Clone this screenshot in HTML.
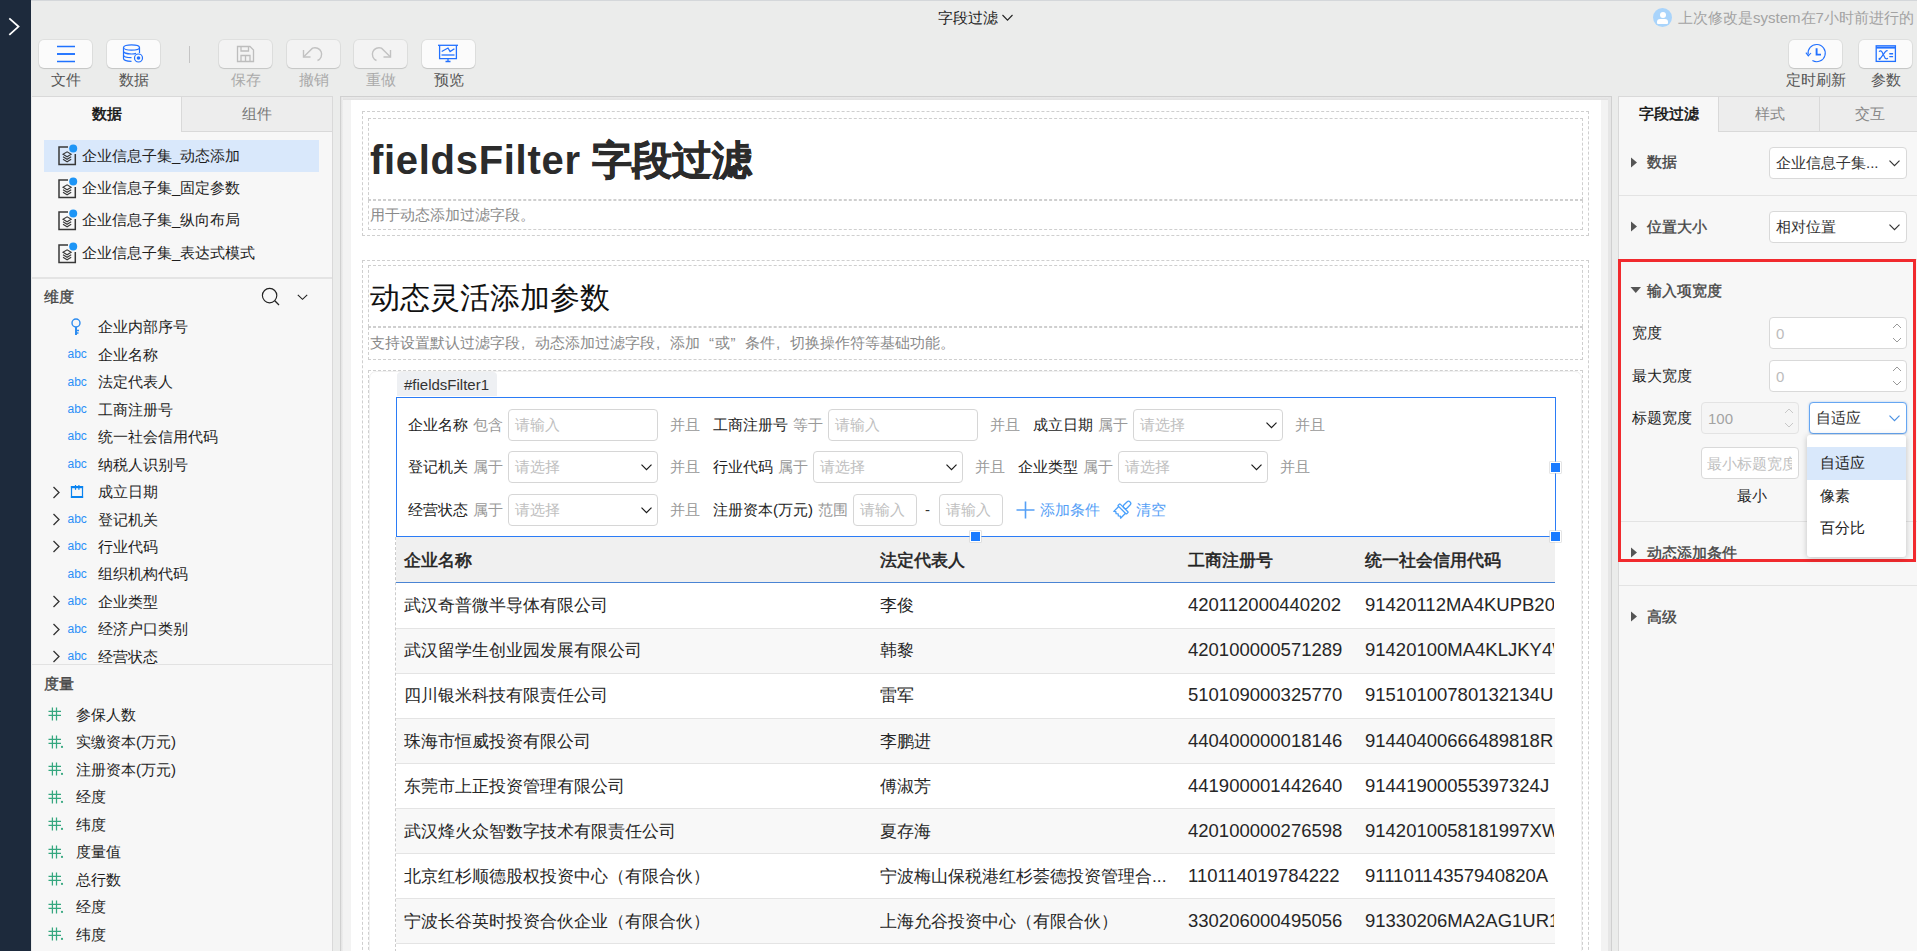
<!DOCTYPE html><html><head><meta charset="utf-8"><title>fieldsFilter</title><style>
*{box-sizing:border-box;margin:0;padding:0}
html,body{width:1917px;height:951px;overflow:hidden}
body{position:relative;background:#ebeceb;font-family:"Liberation Sans",sans-serif;color:#333}
.a{position:absolute}
.t{white-space:nowrap}
.b{-webkit-text-stroke:0.45px currentColor}
.btn{position:absolute;top:40px;width:53px;height:28px;border-radius:5px;background:#fbfbfb;box-shadow:0 1px 1px rgba(0,0,0,.12),0 0 0 1px rgba(0,0,0,.05)}
.btn.dis{background:#f3f3f3}
.inp{position:absolute;background:#fff;border:1px solid #d9d9d9;border-radius:4px}
.dash{position:absolute;border:1px dashed #cfcfcf}
.pc{display:inline-block;width:1em;padding-left:1px}
.ql{display:inline-block;width:1em;text-align:right;padding-right:1px}
.qr{display:inline-block;width:1em;text-align:left;padding-left:0.5px}
</style></head><body>
<div class="a" style="left:0px;top:0px;width:31px;height:951px;background:#1d2a3c"></div>
<svg class="a" style="left:8px;top:17px" width="14" height="20" viewBox="0 0 14 20"><polyline points="1.3,1.4 10.5,9.6 1.3,17.8" fill="none" stroke="#fff" stroke-width="1.8"/></svg>
<div class="a" style="left:31px;top:0px;width:1886px;height:1px;background:#d4d7da"></div>
<div class="a t" style="left:938px;top:7.00px;font-size:15px;line-height:21px;color:#1e1e1e;">字段过滤</div>
<svg class="a" style="left:1001px;top:14px" width="13" height="8" viewBox="0 0 13 8"><polyline points="1.5,1 6.5,6.2 11.5,1" fill="none" stroke="#222" stroke-width="1.1"/></svg>
<div class="a" style="left:1653px;top:8px;width:19px;height:19px;border-radius:50%;background:#a9d4fb;overflow:hidden"><div class="a" style="left:6.5px;top:4px;width:6px;height:6px;border-radius:50%;background:#fff"></div><div class="a" style="left:4px;top:10.5px;width:11px;height:5px;border-radius:3px 3px 1px 1px;background:#fff"></div></div>
<div class="a t" style="left:1678px;top:7.00px;font-size:15px;line-height:21px;color:#a3a3a3;">上次修改是system在7小时前进行的</div>
<div class="btn" style="left:39px"><svg class="a" style="left:17px;top:5px" width="20" height="18" viewBox="0 0 20 18"><path d="M1 1.5H19M1 16.5H19" stroke="#1f72ff" stroke-width="1.3" fill="none"/><path d="M1 9H19" stroke="#1f72ff" stroke-width="1.9" fill="none"/></svg></div>
<div class="a t" style="left:50.5px;top:69.00px;font-size:15px;line-height:21px;color:#555;">文件</div>
<div class="btn" style="left:107px"><svg class="a" style="left:15px;top:4px" width="24" height="20" viewBox="0 0 24 20"><g fill="none" stroke="#2271ff" stroke-width="1.2"><ellipse cx="9.5" cy="3.5" rx="8" ry="2.6"/><path d="M1.5 3.5V14.5C1.5 16 5 17.3 9.5 17.3"/><path d="M17.5 3.5V9"/><path d="M1.5 7.2C1.5 8.7 5 10 9.5 10C11.5 10 13 9.8 14 9.4"/><path d="M1.5 10.9C1.5 12.4 5 13.6 9.5 13.6"/><circle cx="16.5" cy="14" r="4"/></g><circle cx="16.5" cy="14" r="1.8" fill="#2271ff"/></svg></div>
<div class="a t" style="left:118.5px;top:69.00px;font-size:15px;line-height:21px;color:#555;">数据</div>
<div class="a" style="left:189px;top:46px;width:1px;height:17px;background:#c4c4c4"></div>
<div class="btn dis" style="left:219px"><svg class="a" style="left:17px;top:5px" width="19" height="18" viewBox="0 0 19 18"><g fill="none" stroke="#bdbdbd" stroke-width="1.3"><path d="M1.5 1.5H14L17.5 5V16.5H1.5Z"/><path d="M5 1.5V6H12.5V1.5"/><path d="M5 16.5V10.5H14V16.5"/><path d="M9.5 10.5V16.5"/></g></svg></div>
<div class="a t" style="left:230.5px;top:69.00px;font-size:15px;line-height:21px;color:#aaa;">保存</div>
<div class="btn dis" style="left:287px"><svg class="a" style="left:0;top:0" width="53" height="28" viewBox="0 0 53 28"><g fill="none" stroke="#c2c2c2" stroke-width="1.4"><path d="M16.5 17L25.5 8.2A6.3 6.3 0 1 1 30.5 20.5"/><path d="M16.5 10V17H23.5"/></g></svg></div>
<div class="a t" style="left:298.5px;top:69.00px;font-size:15px;line-height:21px;color:#aaa;">撤销</div>
<div class="btn dis" style="left:354px"><svg class="a" style="left:0;top:0" width="53" height="28" viewBox="0 0 53 28"><g fill="none" stroke="#c2c2c2" stroke-width="1.4" transform="translate(53 0) scale(-1 1)"><path d="M16.5 17L25.5 8.2A6.3 6.3 0 1 1 30.5 20.5"/><path d="M16.5 10V17H23.5"/></g></svg></div>
<div class="a t" style="left:365.5px;top:69.00px;font-size:15px;line-height:21px;color:#aaa;">重做</div>
<div class="btn" style="left:422px"><svg class="a" style="left:0;top:0" width="53" height="28" viewBox="0 0 53 28"><g fill="none" stroke="#2271ff" stroke-width="1.3"><path d="M16 5.3H36"/><path d="M17.6 5.3V18.6H34.4V5.3"/><path d="M19.7 11.5L26 8L28.1 11.5L32.4 8.7"/><path d="M19.5 15H32.5"/><path d="M26 18.6V21.5M23.5 21.5H28.5"/></g></svg></div>
<div class="a t" style="left:433.5px;top:69.00px;font-size:15px;line-height:21px;color:#555;">预览</div>
<div class="btn" style="left:1789px"><svg class="a" style="left:0;top:0" width="53" height="28" viewBox="0 0 53 28"><g fill="none" stroke="#2271ff" stroke-width="1.1"><path d="M19.2 14.7A8.6 8.6 0 1 1 23.4 20.6"/><path d="M16.9 12.6L19.3 15.9L22 13"/></g><path d="M27.6 8.3V14.6H32" fill="none" stroke="#2271ff" stroke-width="1.9"/></svg></div>
<div class="a t" style="left:1785.5px;top:69.00px;font-size:15px;line-height:21px;color:#555;">定时刷新</div>
<div class="btn" style="left:1859px"><svg class="a" style="left:0;top:0" width="53" height="28" viewBox="0 0 53 28"><g fill="none" stroke="#2271ff"><rect x="17.2" y="5.8" width="19.2" height="15.6" stroke-width="1.3"/><path d="M17.2 7.6H36.4" stroke-width="2"/><path d="M20 11.6Q21.8 10 23.2 12.2L25.8 17.6Q26.9 19.6 29 18.2" stroke-width="1.2"/><path d="M28.6 10.6Q27.6 10.3 26.4 11.6L21.2 18.6" stroke-width="1.2"/><path d="M30.3 13.8H34.1M30.3 16.6H34.1" stroke-width="1.4"/></g><circle cx="20.6" cy="18.9" r="1.1" fill="#2271ff"/></svg></div>
<div class="a t" style="left:1870.5px;top:69.00px;font-size:15px;line-height:21px;color:#555;">参数</div>
<div class="a" style="left:32px;top:96px;width:301px;height:855px;background:#f7f7f7;border-top:1px solid #d9d9d9;border-right:1px solid #d9d9d9"></div>
<div class="a" style="left:181px;top:97px;width:151px;height:35px;background:#ededed;border-left:1px solid #d9d9d9;border-bottom:1px solid #d9d9d9"></div>
<div class="a t" style="left:91.5px;top:104.3px;font-size:15px;line-height:20px;color:#111;-webkit-text-stroke:0.5px #111">数据</div>
<div class="a t" style="left:241.5px;top:104.30px;font-size:15px;line-height:20px;color:#777;">组件</div>
<div class="a" style="left:44px;top:140px;width:275px;height:32px;background:#d9e8fb"></div>
<svg class="a" style="left:57px;top:144px" width="22" height="22" viewBox="0 0 22 22"><g fill="none" stroke="#383838"><path d="M11 3.1H2V20.6H18.3V10" stroke-width="1.5"/><path d="M6 10.3L10.1 7.8L14.2 10.3L10.1 12.8Z M6 12.8L10.1 15.3L14.2 12.8 M6 15.3L10.1 17.8L14.2 15.3" stroke-width="1.05"/></g><circle cx="16.2" cy="4.6" r="4" fill="#1d95f6"/></svg>
<div class="a t" style="left:82px;top:145.50px;font-size:15px;line-height:20px;color:#1e1e1e;">企业信息子集_动态添加</div>
<svg class="a" style="left:57px;top:177px" width="22" height="22" viewBox="0 0 22 22"><g fill="none" stroke="#383838"><path d="M11 3.1H2V20.6H18.3V10" stroke-width="1.5"/><path d="M6 10.3L10.1 7.8L14.2 10.3L10.1 12.8Z M6 12.8L10.1 15.3L14.2 12.8 M6 15.3L10.1 17.8L14.2 15.3" stroke-width="1.05"/></g><circle cx="16.2" cy="4.6" r="4" fill="#1d95f6"/></svg>
<div class="a t" style="left:82px;top:177.90px;font-size:15px;line-height:20px;color:#1e1e1e;">企业信息子集_固定参数</div>
<svg class="a" style="left:57px;top:209px" width="22" height="22" viewBox="0 0 22 22"><g fill="none" stroke="#383838"><path d="M11 3.1H2V20.6H18.3V10" stroke-width="1.5"/><path d="M6 10.3L10.1 7.8L14.2 10.3L10.1 12.8Z M6 12.8L10.1 15.3L14.2 12.8 M6 15.3L10.1 17.8L14.2 15.3" stroke-width="1.05"/></g><circle cx="16.2" cy="4.6" r="4" fill="#1d95f6"/></svg>
<div class="a t" style="left:82px;top:210.30px;font-size:15px;line-height:20px;color:#1e1e1e;">企业信息子集_纵向布局</div>
<svg class="a" style="left:57px;top:242px" width="22" height="22" viewBox="0 0 22 22"><g fill="none" stroke="#383838"><path d="M11 3.1H2V20.6H18.3V10" stroke-width="1.5"/><path d="M6 10.3L10.1 7.8L14.2 10.3L10.1 12.8Z M6 12.8L10.1 15.3L14.2 12.8 M6 15.3L10.1 17.8L14.2 15.3" stroke-width="1.05"/></g><circle cx="16.2" cy="4.6" r="4" fill="#1d95f6"/></svg>
<div class="a t" style="left:82px;top:242.70px;font-size:15px;line-height:20px;color:#1e1e1e;">企业信息子集_表达式模式</div>
<div class="a" style="left:32px;top:277px;width:300px;height:2px;background:#e4e4e4"></div>
<div class="a t" style="left:44px;top:287.00px;font-size:15px;line-height:20px;color:#444;-webkit-text-stroke:0.35px #444">维度</div>
<svg class="a" style="left:261px;top:287px" width="20" height="20" viewBox="0 0 20 20"><circle cx="8.6" cy="8.6" r="7.2" fill="none" stroke="#222" stroke-width="1.15"/><path d="M13.8 13.8L18 18" stroke="#222" stroke-width="1.3"/></svg>
<svg class="a" style="left:296px;top:293px" width="13" height="9" viewBox="0 0 13 9"><polyline points="1.8,1.8 6.5,6.3 11.2,1.8" fill="none" stroke="#222" stroke-width="1.15"/></svg>
<svg class="a" style="left:70px;top:318px" width="12" height="18" viewBox="0 0 12 18"><circle cx="6" cy="5" r="4" fill="none" stroke="#2d8cf0" stroke-width="1.4"/><path d="M6 9V17" stroke="#2d8cf0" stroke-width="2"/><path d="M6 12.5H9M6 15H8.5" stroke="#2d8cf0" stroke-width="1.3"/></svg>
<div class="a t" style="left:98px;top:317.40px;font-size:15px;line-height:20px;color:#1e1e1e;">企业内部序号</div>
<div class="a t" style="left:67.5px;top:346.05px;font-size:12px;line-height:16px;color:#2a8ff7;">abc</div>
<div class="a t" style="left:98px;top:344.85px;font-size:15px;line-height:20px;color:#1e1e1e;">企业名称</div>
<div class="a t" style="left:67.5px;top:373.50px;font-size:12px;line-height:16px;color:#2a8ff7;">abc</div>
<div class="a t" style="left:98px;top:372.30px;font-size:15px;line-height:20px;color:#1e1e1e;">法定代表人</div>
<div class="a t" style="left:67.5px;top:400.95px;font-size:12px;line-height:16px;color:#2a8ff7;">abc</div>
<div class="a t" style="left:98px;top:399.75px;font-size:15px;line-height:20px;color:#1e1e1e;">工商注册号</div>
<div class="a t" style="left:67.5px;top:428.40px;font-size:12px;line-height:16px;color:#2a8ff7;">abc</div>
<div class="a t" style="left:98px;top:427.20px;font-size:15px;line-height:20px;color:#1e1e1e;">统一社会信用代码</div>
<div class="a t" style="left:67.5px;top:455.85px;font-size:12px;line-height:16px;color:#2a8ff7;">abc</div>
<div class="a t" style="left:98px;top:454.65px;font-size:15px;line-height:20px;color:#1e1e1e;">纳税人识别号</div>
<svg class="a" style="left:52px;top:486px" width="9" height="13" viewBox="0 0 9 13"><polyline points="1.5,1 7,6.5 1.5,12" fill="none" stroke="#333" stroke-width="1.3"/></svg>
<svg class="a" style="left:70px;top:484px" width="15" height="15" viewBox="0 0 15 15"><g fill="#0a84f0"><rect x="0.9" y="2" width="12.2" height="2.2"/><rect x="0.9" y="12" width="12.2" height="2"/><rect x="0.9" y="2" width="1.2" height="12"/><rect x="11.9" y="2" width="1.2" height="12"/><rect x="4.9" y="1" width="1.2" height="4.8"/><rect x="8.3" y="1" width="1.2" height="4.8"/></g></svg>
<div class="a t" style="left:98px;top:482.10px;font-size:15px;line-height:20px;color:#1e1e1e;">成立日期</div>
<svg class="a" style="left:52px;top:513px" width="9" height="13" viewBox="0 0 9 13"><polyline points="1.5,1 7,6.5 1.5,12" fill="none" stroke="#333" stroke-width="1.3"/></svg>
<div class="a t" style="left:67.5px;top:510.75px;font-size:12px;line-height:16px;color:#2a8ff7;">abc</div>
<div class="a t" style="left:98px;top:509.55px;font-size:15px;line-height:20px;color:#1e1e1e;">登记机关</div>
<svg class="a" style="left:52px;top:540px" width="9" height="13" viewBox="0 0 9 13"><polyline points="1.5,1 7,6.5 1.5,12" fill="none" stroke="#333" stroke-width="1.3"/></svg>
<div class="a t" style="left:67.5px;top:538.20px;font-size:12px;line-height:16px;color:#2a8ff7;">abc</div>
<div class="a t" style="left:98px;top:537.00px;font-size:15px;line-height:20px;color:#1e1e1e;">行业代码</div>
<div class="a t" style="left:67.5px;top:565.65px;font-size:12px;line-height:16px;color:#2a8ff7;">abc</div>
<div class="a t" style="left:98px;top:564.45px;font-size:15px;line-height:20px;color:#1e1e1e;">组织机构代码</div>
<svg class="a" style="left:52px;top:595px" width="9" height="13" viewBox="0 0 9 13"><polyline points="1.5,1 7,6.5 1.5,12" fill="none" stroke="#333" stroke-width="1.3"/></svg>
<div class="a t" style="left:67.5px;top:593.10px;font-size:12px;line-height:16px;color:#2a8ff7;">abc</div>
<div class="a t" style="left:98px;top:591.90px;font-size:15px;line-height:20px;color:#1e1e1e;">企业类型</div>
<svg class="a" style="left:52px;top:623px" width="9" height="13" viewBox="0 0 9 13"><polyline points="1.5,1 7,6.5 1.5,12" fill="none" stroke="#333" stroke-width="1.3"/></svg>
<div class="a t" style="left:67.5px;top:620.55px;font-size:12px;line-height:16px;color:#2a8ff7;">abc</div>
<div class="a t" style="left:98px;top:619.35px;font-size:15px;line-height:20px;color:#1e1e1e;">经济户口类别</div>
<svg class="a" style="left:52px;top:650px" width="9" height="13" viewBox="0 0 9 13"><polyline points="1.5,1 7,6.5 1.5,12" fill="none" stroke="#333" stroke-width="1.3"/></svg>
<div class="a t" style="left:67.5px;top:648.00px;font-size:12px;line-height:16px;color:#2a8ff7;">abc</div>
<div class="a t" style="left:98px;top:646.80px;font-size:15px;line-height:20px;color:#1e1e1e;">经营状态</div>
<div class="a" style="left:32px;top:664px;width:300px;height:1px;background:#e2e2e2"></div>
<div class="a" style="left:32px;top:665px;width:300px;height:5px;background:#f7f7f7"></div>
<div class="a t" style="left:44px;top:674.00px;font-size:15px;line-height:20px;color:#444;-webkit-text-stroke:0.35px #444">度量</div>
<svg class="a" style="left:48px;top:707.0px" width="16" height="14" viewBox="0 0 16 14"><g stroke="#35a77f" stroke-width="1.25" fill="none"><path d="M4.4 0.5V13.5M8.5 0.5V13.5M0.5 4.3H13M0.5 8.3H13"/></g></svg>
<div class="a t" style="left:76px;top:704.50px;font-size:15px;line-height:20px;color:#1e1e1e;">参保人数</div>
<svg class="a" style="left:48px;top:734.5px" width="16" height="14" viewBox="0 0 16 14"><g stroke="#35a77f" stroke-width="1.25" fill="none"><path d="M4.4 0.5V13.5M8.5 0.5V13.5M0.5 4.3H13M0.5 8.3H13"/></g><circle cx="14" cy="11.9" r="1.1" fill="#35a77f"/></svg>
<div class="a t" style="left:76px;top:732.00px;font-size:15px;line-height:20px;color:#1e1e1e;">实缴资本(万元)</div>
<svg class="a" style="left:48px;top:762.0px" width="16" height="14" viewBox="0 0 16 14"><g stroke="#35a77f" stroke-width="1.25" fill="none"><path d="M4.4 0.5V13.5M8.5 0.5V13.5M0.5 4.3H13M0.5 8.3H13"/></g><circle cx="14" cy="11.9" r="1.1" fill="#35a77f"/></svg>
<div class="a t" style="left:76px;top:759.50px;font-size:15px;line-height:20px;color:#1e1e1e;">注册资本(万元)</div>
<svg class="a" style="left:48px;top:789.5px" width="16" height="14" viewBox="0 0 16 14"><g stroke="#35a77f" stroke-width="1.25" fill="none"><path d="M4.4 0.5V13.5M8.5 0.5V13.5M0.5 4.3H13M0.5 8.3H13"/></g><circle cx="14" cy="11.9" r="1.1" fill="#35a77f"/></svg>
<div class="a t" style="left:76px;top:787.00px;font-size:15px;line-height:20px;color:#1e1e1e;">经度</div>
<svg class="a" style="left:48px;top:817.0px" width="16" height="14" viewBox="0 0 16 14"><g stroke="#35a77f" stroke-width="1.25" fill="none"><path d="M4.4 0.5V13.5M8.5 0.5V13.5M0.5 4.3H13M0.5 8.3H13"/></g><circle cx="14" cy="11.9" r="1.1" fill="#35a77f"/></svg>
<div class="a t" style="left:76px;top:814.50px;font-size:15px;line-height:20px;color:#1e1e1e;">纬度</div>
<svg class="a" style="left:48px;top:844.5px" width="16" height="14" viewBox="0 0 16 14"><g stroke="#35a77f" stroke-width="1.25" fill="none"><path d="M4.4 0.5V13.5M8.5 0.5V13.5M0.5 4.3H13M0.5 8.3H13"/></g><circle cx="14" cy="11.9" r="1.1" fill="#35a77f"/></svg>
<div class="a t" style="left:76px;top:842.00px;font-size:15px;line-height:20px;color:#1e1e1e;">度量值</div>
<svg class="a" style="left:48px;top:872.0px" width="16" height="14" viewBox="0 0 16 14"><g stroke="#35a77f" stroke-width="1.25" fill="none"><path d="M4.4 0.5V13.5M8.5 0.5V13.5M0.5 4.3H13M0.5 8.3H13"/></g><circle cx="14" cy="11.9" r="1.1" fill="#35a77f"/></svg>
<div class="a t" style="left:76px;top:869.50px;font-size:15px;line-height:20px;color:#1e1e1e;">总行数</div>
<svg class="a" style="left:48px;top:899.5px" width="16" height="14" viewBox="0 0 16 14"><g stroke="#35a77f" stroke-width="1.25" fill="none"><path d="M4.4 0.5V13.5M8.5 0.5V13.5M0.5 4.3H13M0.5 8.3H13"/></g><circle cx="14" cy="11.9" r="1.1" fill="#35a77f"/></svg>
<div class="a t" style="left:76px;top:897.00px;font-size:15px;line-height:20px;color:#1e1e1e;">经度</div>
<svg class="a" style="left:48px;top:927.0px" width="16" height="14" viewBox="0 0 16 14"><g stroke="#35a77f" stroke-width="1.25" fill="none"><path d="M4.4 0.5V13.5M8.5 0.5V13.5M0.5 4.3H13M0.5 8.3H13"/></g><circle cx="14" cy="11.9" r="1.1" fill="#35a77f"/></svg>
<div class="a t" style="left:76px;top:924.50px;font-size:15px;line-height:20px;color:#1e1e1e;">纬度</div>
<div class="a" style="left:340px;top:96px;width:1272px;height:855px;background:#f3f3f3;border:1px solid #d0d0d0;border-bottom:none"></div>
<div class="a" style="left:341px;top:97px;width:1270px;height:3px;background:linear-gradient(#e9e9e9,#e1e1e1)"></div>
<div class="a" style="left:341px;top:97px;width:2px;height:854px;background:linear-gradient(90deg,#e2e2e2,#efefef)"></div>
<div class="a" style="left:1608px;top:97px;width:3px;height:854px;background:#e6e6e6"></div>
<div class="a" style="left:351px;top:100px;width:1250px;height:851px;background:#fff"></div>
<div id="cv">
<div class="dash" style="left:362px;top:111px;width:1227px;height:125px"></div>
<div class="dash" style="left:368px;top:118px;width:1215px;height:82px"></div>
<div class="dash" style="left:368px;top:200px;width:1215px;height:30px"></div>
<div class="a t" style="left:370px;top:135px;font-size:40px;line-height:50px;color:#2b2b2b;font-weight:bold"><span style="letter-spacing:0.7px">fieldsFilter </span><span style="-webkit-text-stroke:0.8px #2b2b2b">字段过滤</span></div>
<div class="a t" style="left:370px;top:205.00px;font-size:15px;line-height:20px;color:#8a8a8a;">用于动态添加过滤字段。</div>
<div class="dash" style="left:362px;top:260px;width:1227px;height:720px"></div>
<div class="dash" style="left:368px;top:265px;width:1215px;height:62px"></div>
<div class="dash" style="left:368px;top:327px;width:1215px;height:33px"></div>
<div class="a t" style="left:369.5px;top:277.50px;font-size:30px;line-height:40px;color:#111;">动态灵活添加参数</div>
<div class="a t" style="left:370px;top:332.50px;font-size:15px;line-height:20px;color:#8a8a8a;">支持设置默认过滤字段<span class="pc">,</span>动态添加过滤字段<span class="pc">,</span>添加<span class="ql">“</span>或<span class="qr">”</span>条件<span class="pc">,</span>切换操作符等基础功能。</div>
<div class="dash" style="left:368px;top:370px;width:1215px;height:620px"></div>
<div class="a" style="left:369px;top:371px;width:1213px;height:600px;border:1px solid #f0f0f0;border-radius:7px;background:#fff"></div>
<div class="a" style="left:397px;top:372px;width:100px;height:24px;background:#eef0f3;border-radius:4px 4px 0 0"></div>
<div class="a t" style="left:404px;top:375.50px;font-size:15px;line-height:18px;color:#333;">#fieldsFilter1</div>
<div class="a" style="left:396px;top:397px;width:1160px;height:140px;border:1px solid #2b7cf6;background:#fff"></div>
<div class="a t" style="left:408px;top:415.00px;font-size:15px;line-height:20px;color:#222;">企业名称</div>
<div class="a t" style="left:473px;top:415.00px;font-size:15px;line-height:20px;color:#999;">包含</div>
<div class="inp" style="left:508px;top:409px;width:150px;height:32px;border-color:#d6d6d6"></div>
<div class="a t" style="left:514.5px;top:415.00px;font-size:15px;line-height:20px;color:#c0c0c0;">请输入</div>
<div class="a t" style="left:670px;top:415.00px;font-size:15px;line-height:20px;color:#999;">并且</div>
<div class="a t" style="left:713px;top:415.00px;font-size:15px;line-height:20px;color:#222;">工商注册号</div>
<div class="a t" style="left:793px;top:415.00px;font-size:15px;line-height:20px;color:#999;">等于</div>
<div class="inp" style="left:828px;top:409px;width:150px;height:32px;border-color:#d6d6d6"></div>
<div class="a t" style="left:834.5px;top:415.00px;font-size:15px;line-height:20px;color:#c0c0c0;">请输入</div>
<div class="a t" style="left:990px;top:415.00px;font-size:15px;line-height:20px;color:#999;">并且</div>
<div class="a t" style="left:1033px;top:415.00px;font-size:15px;line-height:20px;color:#222;">成立日期</div>
<div class="a t" style="left:1098px;top:415.00px;font-size:15px;line-height:20px;color:#999;">属于</div>
<div class="inp" style="left:1133px;top:409px;width:150px;height:32px;border-color:#d6d6d6"></div>
<div class="a t" style="left:1139.5px;top:415.00px;font-size:15px;line-height:20px;color:#c0c0c0;">请选择</div>
<svg class="a" style="left:1265px;top:421px" width="13" height="9" viewBox="0 0 13 9"><polyline points="1.5,1.6 6.5,6.6 11.5,1.6" fill="none" stroke="#1a1a1a" stroke-width="1.2"/></svg>
<div class="a t" style="left:1295px;top:415.00px;font-size:15px;line-height:20px;color:#999;">并且</div>
<div class="a t" style="left:408px;top:457.00px;font-size:15px;line-height:20px;color:#222;">登记机关</div>
<div class="a t" style="left:473px;top:457.00px;font-size:15px;line-height:20px;color:#999;">属于</div>
<div class="inp" style="left:508px;top:451px;width:150px;height:32px;border-color:#d6d6d6"></div>
<div class="a t" style="left:514.5px;top:457.00px;font-size:15px;line-height:20px;color:#c0c0c0;">请选择</div>
<svg class="a" style="left:640px;top:463px" width="13" height="9" viewBox="0 0 13 9"><polyline points="1.5,1.6 6.5,6.6 11.5,1.6" fill="none" stroke="#1a1a1a" stroke-width="1.2"/></svg>
<div class="a t" style="left:670px;top:457.00px;font-size:15px;line-height:20px;color:#999;">并且</div>
<div class="a t" style="left:713px;top:457.00px;font-size:15px;line-height:20px;color:#222;">行业代码</div>
<div class="a t" style="left:778px;top:457.00px;font-size:15px;line-height:20px;color:#999;">属于</div>
<div class="inp" style="left:813px;top:451px;width:150px;height:32px;border-color:#d6d6d6"></div>
<div class="a t" style="left:819.5px;top:457.00px;font-size:15px;line-height:20px;color:#c0c0c0;">请选择</div>
<svg class="a" style="left:945px;top:463px" width="13" height="9" viewBox="0 0 13 9"><polyline points="1.5,1.6 6.5,6.6 11.5,1.6" fill="none" stroke="#1a1a1a" stroke-width="1.2"/></svg>
<div class="a t" style="left:975px;top:457.00px;font-size:15px;line-height:20px;color:#999;">并且</div>
<div class="a t" style="left:1018px;top:457.00px;font-size:15px;line-height:20px;color:#222;">企业类型</div>
<div class="a t" style="left:1083px;top:457.00px;font-size:15px;line-height:20px;color:#999;">属于</div>
<div class="inp" style="left:1118px;top:451px;width:150px;height:32px;border-color:#d6d6d6"></div>
<div class="a t" style="left:1124.5px;top:457.00px;font-size:15px;line-height:20px;color:#c0c0c0;">请选择</div>
<svg class="a" style="left:1250px;top:463px" width="13" height="9" viewBox="0 0 13 9"><polyline points="1.5,1.6 6.5,6.6 11.5,1.6" fill="none" stroke="#1a1a1a" stroke-width="1.2"/></svg>
<div class="a t" style="left:1280px;top:457.00px;font-size:15px;line-height:20px;color:#999;">并且</div>
<div class="a t" style="left:408px;top:500.00px;font-size:15px;line-height:20px;color:#222;">经营状态</div>
<div class="a t" style="left:473px;top:500.00px;font-size:15px;line-height:20px;color:#999;">属于</div>
<div class="inp" style="left:508px;top:494px;width:150px;height:32px;border-color:#d6d6d6"></div>
<div class="a t" style="left:514.5px;top:500.00px;font-size:15px;line-height:20px;color:#c0c0c0;">请选择</div>
<svg class="a" style="left:640px;top:506px" width="13" height="9" viewBox="0 0 13 9"><polyline points="1.5,1.6 6.5,6.6 11.5,1.6" fill="none" stroke="#1a1a1a" stroke-width="1.2"/></svg>
<div class="a t" style="left:670px;top:500.00px;font-size:15px;line-height:20px;color:#999;">并且</div>
<div class="a t" style="left:713px;top:500.00px;font-size:15px;line-height:20px;color:#222;">注册资本(万元)</div>
<div class="a t" style="left:818px;top:500.00px;font-size:15px;line-height:20px;color:#999;">范围</div>
<div class="inp" style="left:853px;top:494px;width:64px;height:32px;border-color:#d6d6d6"></div>
<div class="a t" style="left:859.5px;top:500.00px;font-size:15px;line-height:20px;color:#c0c0c0;">请输入</div>
<div class="a t" style="left:925px;top:500.00px;font-size:15px;line-height:20px;color:#333;">-</div>
<div class="inp" style="left:939px;top:494px;width:64px;height:32px;border-color:#d6d6d6"></div>
<div class="a t" style="left:945.5px;top:500.00px;font-size:15px;line-height:20px;color:#c0c0c0;">请输入</div>
<svg class="a" style="left:1016px;top:501px" width="19" height="18" viewBox="0 0 19 18"><path d="M9.5 0.5V17.5M0.5 9H18.5" stroke="#55a0f6" stroke-width="1.6"/></svg>
<div class="a t" style="left:1040px;top:500.00px;font-size:15px;line-height:20px;color:#55a0f6;">添加条件</div>
<svg class="a" style="left:1111px;top:497px" width="24" height="24" viewBox="-12 -12 24 24"><g transform="rotate(45)" fill="none" stroke="#4aa0fb" stroke-width="1.3" stroke-linejoin="round"><rect x="-2.2" y="-10" width="4.4" height="8.5" rx="2.2"/><rect x="-6" y="-1.5" width="12" height="2.8" rx="0.6"/><path d="M-4.8 1.3V8.2L-3.2 6.9L-1.6 8.2L0 6.9L1.6 8.2L3.2 6.9L4.8 8.2V1.3"/></g></svg>
<div class="a t" style="left:1136px;top:500.00px;font-size:15px;line-height:20px;color:#55a0f6;">清空</div>
<div class="a" style="left:396px;top:537px;width:1159px;height:45px;background:#f0f0f0"></div>
<div class="a" style="left:396px;top:582px;width:1159px;height:1.2000000000000455px;background:#4a84d4"></div>
<div class="a t" style="left:404px;top:547.7px;font-size:17.4px;line-height:24px;color:#222;-webkit-text-stroke:0.55px #222">企业名称</div>
<div class="a t" style="left:880px;top:547.7px;font-size:17.4px;line-height:24px;color:#222;-webkit-text-stroke:0.55px #222">法定代表人</div>
<div class="a t" style="left:1188px;top:547.7px;font-size:17.4px;line-height:24px;color:#222;-webkit-text-stroke:0.55px #222">工商注册号</div>
<div class="a t" style="left:1365px;top:547.7px;font-size:17.4px;line-height:24px;color:#222;-webkit-text-stroke:0.55px #222">统一社会信用代码</div>
<div class="a" style="left:396px;top:583.0px;width:1159px;height:45.799999999999955px;background:#ffffff"></div>
<div class="a" style="left:396px;top:627.8px;width:1159px;height:1.0px;background:#e4e4e4"></div>
<div class="a t" style="left:404px;top:593.05px;width:470px;overflow:hidden;font-size:17.4px;line-height:24px;color:#262626;">武汉奇普微半导体有限公司</div>
<div class="a t" style="left:880px;top:593.05px;width:300px;overflow:hidden;font-size:17.4px;line-height:24px;color:#262626;">李俊</div>
<div class="a t" style="left:1188px;top:593.05px;width:170px;overflow:hidden;font-size:17.4px;line-height:24px;color:#262626;font-size:18.5px;">420112000440202</div>
<div class="a t" style="left:1365px;top:593.05px;width:189px;overflow:hidden;font-size:17.4px;line-height:24px;color:#262626;font-size:18.5px;">91420112MA4KUPB20Y</div>
<div class="a" style="left:396px;top:628.8px;width:1159px;height:45.030000000000086px;background:#f8f8f8"></div>
<div class="a" style="left:396px;top:672.83px;width:1159px;height:1.0px;background:#e4e4e4"></div>
<div class="a t" style="left:404px;top:638.46px;width:470px;overflow:hidden;font-size:17.4px;line-height:24px;color:#262626;">武汉留学生创业园发展有限公司</div>
<div class="a t" style="left:880px;top:638.46px;width:300px;overflow:hidden;font-size:17.4px;line-height:24px;color:#262626;">韩黎</div>
<div class="a t" style="left:1188px;top:638.46px;width:170px;overflow:hidden;font-size:17.4px;line-height:24px;color:#262626;font-size:18.5px;">420100000571289</div>
<div class="a t" style="left:1365px;top:638.46px;width:189px;overflow:hidden;font-size:17.4px;line-height:24px;color:#262626;font-size:18.5px;">91420100MA4KLJKY4W</div>
<div class="a" style="left:396px;top:673.83px;width:1159px;height:45.02999999999997px;background:#ffffff"></div>
<div class="a" style="left:396px;top:717.86px;width:1159px;height:1.0px;background:#e4e4e4"></div>
<div class="a t" style="left:404px;top:683.49px;width:470px;overflow:hidden;font-size:17.4px;line-height:24px;color:#262626;">四川银米科技有限责任公司</div>
<div class="a t" style="left:880px;top:683.49px;width:300px;overflow:hidden;font-size:17.4px;line-height:24px;color:#262626;">雷军</div>
<div class="a t" style="left:1188px;top:683.49px;width:170px;overflow:hidden;font-size:17.4px;line-height:24px;color:#262626;font-size:18.5px;">510109000325770</div>
<div class="a t" style="left:1365px;top:683.49px;width:189px;overflow:hidden;font-size:17.4px;line-height:24px;color:#262626;font-size:18.5px;">91510100780132134U</div>
<div class="a" style="left:396px;top:718.86px;width:1159px;height:45.02999999999997px;background:#f8f8f8"></div>
<div class="a" style="left:396px;top:762.89px;width:1159px;height:1.0px;background:#e4e4e4"></div>
<div class="a t" style="left:404px;top:728.52px;width:470px;overflow:hidden;font-size:17.4px;line-height:24px;color:#262626;">珠海市恒威投资有限公司</div>
<div class="a t" style="left:880px;top:728.52px;width:300px;overflow:hidden;font-size:17.4px;line-height:24px;color:#262626;">李鹏进</div>
<div class="a t" style="left:1188px;top:728.52px;width:170px;overflow:hidden;font-size:17.4px;line-height:24px;color:#262626;font-size:18.5px;">440400000018146</div>
<div class="a t" style="left:1365px;top:728.52px;width:189px;overflow:hidden;font-size:17.4px;line-height:24px;color:#262626;font-size:18.5px;">91440400666489818R</div>
<div class="a" style="left:396px;top:763.89px;width:1159px;height:45.02999999999997px;background:#ffffff"></div>
<div class="a" style="left:396px;top:807.92px;width:1159px;height:1.0px;background:#e4e4e4"></div>
<div class="a t" style="left:404px;top:773.55px;width:470px;overflow:hidden;font-size:17.4px;line-height:24px;color:#262626;">东莞市上正投资管理有限公司</div>
<div class="a t" style="left:880px;top:773.55px;width:300px;overflow:hidden;font-size:17.4px;line-height:24px;color:#262626;">傅淑芳</div>
<div class="a t" style="left:1188px;top:773.55px;width:170px;overflow:hidden;font-size:17.4px;line-height:24px;color:#262626;font-size:18.5px;">441900001442640</div>
<div class="a t" style="left:1365px;top:773.55px;width:189px;overflow:hidden;font-size:17.4px;line-height:24px;color:#262626;font-size:18.5px;">91441900055397324J</div>
<div class="a" style="left:396px;top:808.92px;width:1159px;height:45.030000000000086px;background:#f8f8f8"></div>
<div class="a" style="left:396px;top:852.95px;width:1159px;height:1.0px;background:#e4e4e4"></div>
<div class="a t" style="left:404px;top:818.58px;width:470px;overflow:hidden;font-size:17.4px;line-height:24px;color:#262626;">武汉烽火众智数字技术有限责任公司</div>
<div class="a t" style="left:880px;top:818.58px;width:300px;overflow:hidden;font-size:17.4px;line-height:24px;color:#262626;">夏存海</div>
<div class="a t" style="left:1188px;top:818.58px;width:170px;overflow:hidden;font-size:17.4px;line-height:24px;color:#262626;font-size:18.5px;">420100000276598</div>
<div class="a t" style="left:1365px;top:818.58px;width:189px;overflow:hidden;font-size:17.4px;line-height:24px;color:#262626;font-size:18.5px;">9142010058181997XW</div>
<div class="a" style="left:396px;top:853.95px;width:1159px;height:45.02999999999997px;background:#ffffff"></div>
<div class="a" style="left:396px;top:897.98px;width:1159px;height:1.0px;background:#e4e4e4"></div>
<div class="a t" style="left:404px;top:863.61px;width:470px;overflow:hidden;font-size:17.4px;line-height:24px;color:#262626;">北京红杉顺德股权投资中心（有限合伙）</div>
<div class="a t" style="left:880px;top:863.61px;width:300px;overflow:hidden;font-size:17.4px;line-height:24px;color:#262626;">宁波梅山保税港红杉荟德投资管理合...</div>
<div class="a t" style="left:1188px;top:863.61px;width:170px;overflow:hidden;font-size:17.4px;line-height:24px;color:#262626;font-size:18.5px;">110114019784222</div>
<div class="a t" style="left:1365px;top:863.61px;width:189px;overflow:hidden;font-size:17.4px;line-height:24px;color:#262626;font-size:18.5px;">91110114357940820A</div>
<div class="a" style="left:396px;top:898.98px;width:1159px;height:45.02999999999997px;background:#f8f8f8"></div>
<div class="a" style="left:396px;top:943.01px;width:1159px;height:1.0px;background:#e4e4e4"></div>
<div class="a t" style="left:404px;top:908.64px;width:470px;overflow:hidden;font-size:17.4px;line-height:24px;color:#262626;">宁波长谷英时投资合伙企业（有限合伙）</div>
<div class="a t" style="left:880px;top:908.64px;width:300px;overflow:hidden;font-size:17.4px;line-height:24px;color:#262626;">上海允谷投资中心（有限合伙）</div>
<div class="a t" style="left:1188px;top:908.64px;width:170px;overflow:hidden;font-size:17.4px;line-height:24px;color:#262626;font-size:18.5px;">330206000495056</div>
<div class="a t" style="left:1365px;top:908.64px;width:189px;overflow:hidden;font-size:17.4px;line-height:24px;color:#262626;font-size:18.5px;">91330206MA2AG1UR1X</div>
<div class="a" style="left:396px;top:944.01px;width:1159px;height:45.02999999999997px;background:#ffffff"></div>
<div class="a" style="left:396px;top:988.04px;width:1159px;height:1.0px;background:#e4e4e4"></div>
<div class="a t" style="left:404px;top:953.67px;width:470px;overflow:hidden;font-size:17.4px;line-height:24px;color:#262626;">北京某某投资有限公司</div>
<div class="a t" style="left:880px;top:953.67px;width:300px;overflow:hidden;font-size:17.4px;line-height:24px;color:#262626;">张三</div>
<div class="a t" style="left:1188px;top:953.67px;width:170px;overflow:hidden;font-size:17.4px;line-height:24px;color:#262626;font-size:18.5px;">110000000000000</div>
<div class="a t" style="left:1365px;top:953.67px;width:189px;overflow:hidden;font-size:17.4px;line-height:24px;color:#262626;font-size:18.5px;">91110000000000000X</div>
<div class="a" style="left:395px;top:537px;width:1px;height:420px;border-left:1px dashed #ccc"></div>
<div class="a" style="left:1549.5px;top:461.5px;width:11px;height:11px;background:#1a7bff;border:1px solid #fff;box-shadow:0 0 0 0.5px #ccc"></div>
<div class="a" style="left:1549.5px;top:530.5px;width:11px;height:11px;background:#1a7bff;border:1px solid #fff;box-shadow:0 0 0 0.5px #ccc"></div>
<div class="a" style="left:970.0px;top:530.5px;width:11px;height:11px;background:#1a7bff;border:1px solid #fff;box-shadow:0 0 0 0.5px #ccc"></div>
</div>
<div class="a" style="left:1618px;top:96px;width:299px;height:855px;background:#f7f7f7;border-top:1px solid #d9d9d9;border-left:1px solid #d9d9d9"></div>
<div class="a" style="left:1718px;top:97px;width:199px;height:35px;background:#ededed;border-left:1px solid #d9d9d9;border-bottom:1px solid #d9d9d9"></div>
<div class="a" style="left:1819px;top:97px;width:1px;height:34px;background:#d9d9d9"></div>
<div class="a t b" style="left:1639px;top:104px;font-size:15px;line-height:20px;color:#111;-webkit-text-stroke:0.5px #111">字段过滤</div>
<div class="a t" style="left:1754.5px;top:104.00px;font-size:15px;line-height:20px;color:#888;">样式</div>
<div class="a t" style="left:1855px;top:104.00px;font-size:15px;line-height:20px;color:#888;">交互</div>
<svg class="a" style="left:1630px;top:157px" width="8" height="11" viewBox="0 0 8 11"><path d="M1 0.5L7 5.5L1 10.5Z" fill="#555"/></svg>
<div class="a t" style="left:1647px;top:152.00px;font-size:15px;line-height:20px;color:#444;-webkit-text-stroke:0.35px #444">数据</div>
<div class="inp" style="left:1769px;top:147px;width:138px;height:32px;border-color:#d9d9d9;"></div>
<div class="a t" style="left:1776px;top:153.00px;font-size:15px;line-height:20px;color:#333;">企业信息子集...</div>
<svg class="a" style="left:1888px;top:159px" width="13" height="9" viewBox="0 0 13 9"><polyline points="1.5,1.6 6.5,6.6 11.5,1.6" fill="none" stroke="#333" stroke-width="1.2"/></svg>
<div class="a" style="left:1619px;top:195px;width:298px;height:1px;background:#e3e3e3"></div>
<svg class="a" style="left:1630px;top:221px" width="8" height="11" viewBox="0 0 8 11"><path d="M1 0.5L7 5.5L1 10.5Z" fill="#555"/></svg>
<div class="a t" style="left:1647px;top:217.00px;font-size:15px;line-height:20px;color:#444;-webkit-text-stroke:0.35px #444">位置大小</div>
<div class="inp" style="left:1769px;top:211px;width:138px;height:32px;border-color:#d9d9d9;"></div>
<div class="a t" style="left:1776px;top:217.00px;font-size:15px;line-height:20px;color:#333;">相对位置</div>
<svg class="a" style="left:1888px;top:223px" width="13" height="9" viewBox="0 0 13 9"><polyline points="1.5,1.6 6.5,6.6 11.5,1.6" fill="none" stroke="#333" stroke-width="1.2"/></svg>
<div class="a" style="left:1619px;top:259px;width:298px;height:1px;background:#e3e3e3"></div>
<svg class="a" style="left:1630px;top:286px" width="12" height="8" viewBox="0 0 12 8"><path d="M0.5 1L11 1L5.75 7Z" fill="#555"/></svg>
<div class="a t" style="left:1647px;top:280.50px;font-size:15px;line-height:20px;color:#444;-webkit-text-stroke:0.35px #444">输入项宽度</div>
<div class="a t" style="left:1632px;top:323.00px;font-size:15px;line-height:20px;color:#222;">宽度</div>
<div class="inp" style="left:1769px;top:317px;width:138px;height:32px;background:#fff;border-color:#d9d9d9"></div>
<div class="a t" style="left:1776px;top:323.50px;font-size:15px;line-height:20px;color:#bcbcbc;">0</div>
<svg class="a" style="left:1891px;top:322px" width="12" height="22" viewBox="0 0 12 22"><g fill="none" stroke="#999" stroke-width="1"><polyline points="2,6 6,2 10,6"/><polyline points="2,16 6,20 10,16"/></g></svg>
<div class="a t" style="left:1632px;top:365.50px;font-size:15px;line-height:20px;color:#222;">最大宽度</div>
<div class="inp" style="left:1769px;top:360px;width:138px;height:32px;background:#fff;border-color:#d9d9d9"></div>
<div class="a t" style="left:1776px;top:366.50px;font-size:15px;line-height:20px;color:#bcbcbc;">0</div>
<svg class="a" style="left:1891px;top:365px" width="12" height="22" viewBox="0 0 12 22"><g fill="none" stroke="#999" stroke-width="1"><polyline points="2,6 6,2 10,6"/><polyline points="2,16 6,20 10,16"/></g></svg>
<div class="a t" style="left:1632px;top:408.00px;font-size:15px;line-height:20px;color:#222;">标题宽度</div>
<div class="inp" style="left:1701px;top:402px;width:98px;height:32px;background:#f5f5f5;border-color:#e3e3e3"></div>
<div class="a t" style="left:1708px;top:408.50px;font-size:15px;line-height:20px;color:#a3a3a3;">100</div>
<svg class="a" style="left:1783px;top:407px" width="12" height="22" viewBox="0 0 12 22"><g fill="none" stroke="#c8c8c8" stroke-width="1"><polyline points="2,6 6,2 10,6"/><polyline points="2,16 6,20 10,16"/></g></svg>
<div class="inp" style="left:1809px;top:402px;width:98px;height:32px;border-color:#66a6f2;box-shadow:0 0 2px rgba(74,144,226,.5)"></div>
<div class="a t" style="left:1816px;top:408.00px;font-size:15px;line-height:20px;color:#333;">自适应</div>
<svg class="a" style="left:1888px;top:414px" width="13" height="9" viewBox="0 0 13 9"><polyline points="1.5,1.6 6.5,6.6 11.5,1.6" fill="none" stroke="#4a90e2" stroke-width="1.2"/></svg>
<div class="inp" style="left:1701px;top:447px;width:98px;height:32px;border-color:#d9d9d9;overflow:hidden"></div>
<div class="a t" style="left:1707px;top:453.50px;font-size:15px;line-height:20px;color:#c0c0c0;width:85px;overflow:hidden">最小标题宽度</div>
<div class="a t" style="left:1737px;top:486.00px;font-size:15px;line-height:20px;color:#222;">最小</div>
<div class="a" style="left:1619px;top:521px;width:298px;height:1px;background:#e3e3e3"></div>
<svg class="a" style="left:1630px;top:547px" width="8" height="11" viewBox="0 0 8 11"><path d="M1 0.5L7 5.5L1 10.5Z" fill="#555"/></svg>
<div class="a t" style="left:1647px;top:543.00px;font-size:15px;line-height:20px;color:#444;-webkit-text-stroke:0.35px #444">动态添加条件</div>
<div class="a" style="left:1619px;top:585px;width:298px;height:1px;background:#e3e3e3"></div>
<svg class="a" style="left:1630px;top:611px" width="8" height="11" viewBox="0 0 8 11"><path d="M1 0.5L7 5.5L1 10.5Z" fill="#555"/></svg>
<div class="a t" style="left:1647px;top:607.00px;font-size:15px;line-height:20px;color:#444;-webkit-text-stroke:0.35px #444">高级</div>
<div class="a" style="left:1619px;top:561px;width:298px;height:24px;background:#f7f7f7"></div>
<div class="a" style="left:1618px;top:259px;width:298px;height:303px;border:3px solid #f12a2e"></div>
<div class="a" style="left:1807px;top:435px;width:99px;height:122px;background:#fff;border-radius:3px;box-shadow:0 1px 6px rgba(0,0,0,.22)"></div>
<div class="a" style="left:1807px;top:447px;width:99px;height:33px;background:#d9e8fb"></div>
<div class="a t" style="left:1820px;top:453.00px;font-size:15px;line-height:20px;color:#222;">自适应</div>
<div class="a t" style="left:1820px;top:486.00px;font-size:15px;line-height:20px;color:#222;">像素</div>
<div class="a t" style="left:1820px;top:517.50px;font-size:15px;line-height:20px;color:#222;">百分比</div>
</body></html>
